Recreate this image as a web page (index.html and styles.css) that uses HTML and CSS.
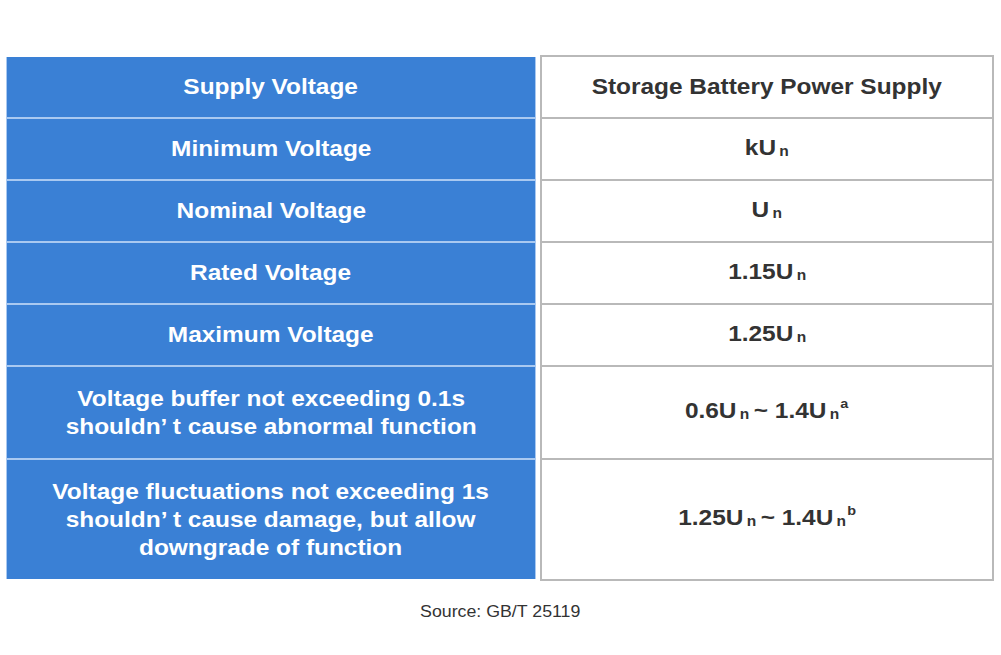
FILE: index.html
```html
<!DOCTYPE html>
<html>
<head>
<meta charset="utf-8">
<link rel="stylesheet" href="styles.css">
</head>
<body>
<div class="page">
  <div class="table">
    <div class="col left">
      <div class="cell r1"><span class="t">Supply Voltage</span></div>
      <div class="cell r1"><span class="t">Minimum Voltage</span></div>
      <div class="cell r1"><span class="t">Nominal Voltage</span></div>
      <div class="cell r1"><span class="t">Rated Voltage</span></div>
      <div class="cell r1"><span class="t">Maximum Voltage</span></div>
      <div class="cell r6"><span class="t">Voltage buffer not exceeding 0.1s<br>shouldn’ t cause abnormal function</span></div>
      <div class="cell r7"><span class="t">Voltage fluctuations not exceeding 1s<br>shouldn’ t cause damage, but allow<br>downgrade of function</span></div>
    </div>
    <div class="col right">
      <div class="cell r1"><span class="t">Storage Battery Power Supply</span></div>
      <div class="cell r1"><span class="t">kU<span class="sub">n</span></span></div>
      <div class="cell r1"><span class="t">U<span class="sub">n</span></span></div>
      <div class="cell r1"><span class="t">1.15U<span class="sub">n</span></span></div>
      <div class="cell r1"><span class="t">1.25U<span class="sub">n</span></span></div>
      <div class="cell r6"><span class="t">0.6U<span class="sub">n</span><span class="tl">~ 1.4U</span><span class="sub">n</span><span class="sup">a</span></span></div>
      <div class="cell r7"><span class="t">1.25U<span class="sub">n</span><span class="tl">~ 1.4U</span><span class="sub">n</span><span class="sup">b</span></span></div>
    </div>
  </div>
  <div class="source"><span class="t">Source: GB/T 25119</span></div>
</div>
</body>
</html>
```

FILE: styles.css
```css
html, body {
  margin: 0;
  padding: 0;
  background: #ffffff;
}

.page {
  width: 1001px;
  height: 655px;
  padding-top: 55px;
  box-sizing: border-box;
  font-family: "Liberation Sans", Arial, sans-serif;
}

.table {
  display: grid;
  grid-template-columns: 530px 454px;
  column-gap: 4px;
  margin-left: 6px;
  align-items: start;
}

.col {
  display: flex;
  flex-direction: column;
}

.left {
  margin-top: 2px;
  gap: 2px;
  padding: 0 1px;
  background: #a9c9f1;
}

.left .cell {
  background: #3a80d5;
  color: #ffffff;
}

.right {
  border: 2px solid #b9b9b9;
}

.right .cell {
  color: #333333;
  background: #ffffff;
}

.right .cell + .cell {
  border-top: 2px solid #b9b9b9;
}

.cell {
  display: flex;
  align-items: center;
  justify-content: center;
  text-align: center;
  font-weight: bold;
  font-size: 22px;
  line-height: 28px;
}

.t {
  display: inline-block;
  transform: scaleX(1.11);
}

.r1 { height: 60px; }
.r6 { height: 91px; }
.r7 { height: 119px; }

.sub {
  font-size: 14px;
  margin-left: 3px;
  position: relative;
  top: 1px;
}

.tl {
  margin-left: 4px;
}

.sup {
  font-size: 13px;
  position: relative;
  top: -10px;
  margin-left: 1px;
}

.source {
  margin-top: 21px;
  text-align: center;
  font-size: 16px;
  color: #333333;
  line-height: 20px;
}
```
